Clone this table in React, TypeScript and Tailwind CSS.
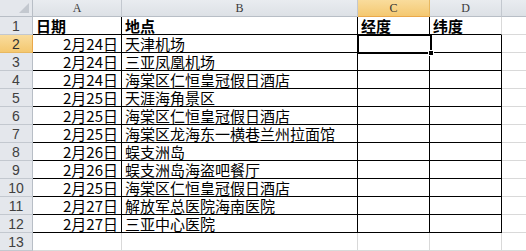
import React from "react";

const rows: [string, string][] = [
  ["2月24日", "天津机场"],
  ["2月24日", "三亚凤凰机场"],
  ["2月24日", "海棠区仁恒皇冠假日酒店"],
  ["2月25日", "天涯海角景区"],
  ["2月25日", "海棠区仁恒皇冠假日酒店"],
  ["2月25日", "海棠区龙海东一横巷兰州拉面馆"],
  ["2月26日", "蜈支洲岛"],
  ["2月26日", "蜈支洲岛海盗吧餐厅"],
  ["2月25日", "海棠区仁恒皇冠假日酒店"],
  ["2月27日", "解放军总医院海南医院"],
  ["2月27日", "三亚中心医院"],
];

const cjk = { fontFamily: '"Noto Sans CJK SC", "Noto Sans", sans-serif' };

function ColHead({ w, label, active }: { w: string; label: string; active?: boolean }) {
  return (
    <div
      className={`${w} h-[17px] shrink-0 border-r border-b flex items-center justify-center text-[12px] ${
        active
          ? "bg-gradient-to-b from-[#f9dc9c] to-[#f4c870] border-r-[#e8b860] border-b-[#eaa84a] text-[#303030]"
          : "bg-gradient-to-b from-[#e9ecf0] to-[#dde1e6] border-r-[#c3c8cf] border-b-[#b8bec6] text-[#3a3a3a]"
      }`}
      style={{ fontFamily: '"Liberation Serif", serif' }}
    >
      {label}
    </div>
  );
}

function RowHead({ n, active }: { n: number; active?: boolean }) {
  return (
    <div
      className={`w-[33px] h-[18px] shrink-0 border-r border-b flex items-center justify-center text-[14px] leading-none ${
        active
          ? "bg-gradient-to-b from-[#f9dc9c] to-[#f4c870] border-r-[#eaa84a] border-b-[#e8b860] text-[#303030]"
          : "bg-[#e4e7ec] border-r-[#b8bec6] border-b-[#c3c8cf] text-[#404040]"
      }`}
      style={{ fontFamily: '"Liberation Sans", sans-serif' }}
    >
      {n}
    </div>
  );
}

function Cell({
  w,
  r,
  b,
  children,
  right,
  bold,
}: {
  w: string;
  r: boolean;
  b: boolean;
  children?: React.ReactNode;
  right?: boolean;
  bold?: boolean;
}) {
  return (
    <div
      className={`${w} h-[18px] shrink-0 border-r border-b flex items-end overflow-visible whitespace-nowrap bg-white text-[15px] leading-[17px] text-black px-[3px] ${
        r ? "border-r-black" : "border-r-[#d9d9d9]"
      } ${b ? "border-b-black" : "border-b-[#d9d9d9]"} ${right ? "justify-end" : "justify-start"} ${
        bold ? "font-bold" : ""
      }`}
      style={cjk}
    >
      {children}
    </div>
  );
}

export default function App() {
  return (
    <div className="relative w-[526px] h-[251px] overflow-hidden bg-white">
      <div className="flex">
        <div className="w-[33px] h-[17px] shrink-0 border-r border-b border-r-[#b8bec6] border-b-[#b8bec6] bg-[#e4e7ec] relative">
          <div
            className="absolute right-[3px] bottom-[3px] w-0 h-0 border-l-[10px] border-l-transparent border-b-[10px] border-b-[#c3c8cf]"
          />
        </div>
        <ColHead w="w-[89px]" label="A" />
        <ColHead w="w-[236px]" label="B" />
        <ColHead w="w-[72px]" label="C" active />
        <ColHead w="w-[72px]" label="D" />
        <ColHead w="w-[60px]" label="" />
      </div>
      <div className="flex">
        <RowHead n={1} />
        <Cell w="w-[89px]" r b bold>
          日期
        </Cell>
        <Cell w="w-[236px]" r b bold>
          地点
        </Cell>
        <Cell w="w-[72px]" r b bold>
          经度
        </Cell>
        <Cell w="w-[72px]" r={false} b bold>
          纬度
        </Cell>
        <Cell w="w-[60px]" r={false} b={false} />
      </div>
      {rows.map(([d, p], i) => (
        <div className="flex" key={i}>
          <RowHead n={i + 2} active={i === 0} />
          <Cell w="w-[89px]" r b right>
            {d}
          </Cell>
          <Cell w="w-[236px]" r b>
            {p}
          </Cell>
          <Cell w="w-[72px]" r b />
          <Cell w="w-[72px]" r b />
          <Cell w="w-[60px]" r={false} b={false} />
        </div>
      ))}
      <div className="flex">
        <RowHead n={13} />
        <Cell w="w-[89px]" r={false} b={false} />
        <Cell w="w-[236px]" r={false} b={false} />
        <Cell w="w-[72px]" r={false} b={false} />
        <Cell w="w-[72px]" r={false} b={false} />
        <Cell w="w-[60px]" r={false} b={false} />
      </div>
      {/* selection */}
      <div className="absolute left-[357px] top-[34px] w-[75px] h-[20px] border-2 border-black">
        <div className="w-full h-full border border-white" />
      </div>
      <div className="absolute left-[428px] top-[50px] w-[6px] h-[6px] bg-black border border-white" />
    </div>
  );
}
